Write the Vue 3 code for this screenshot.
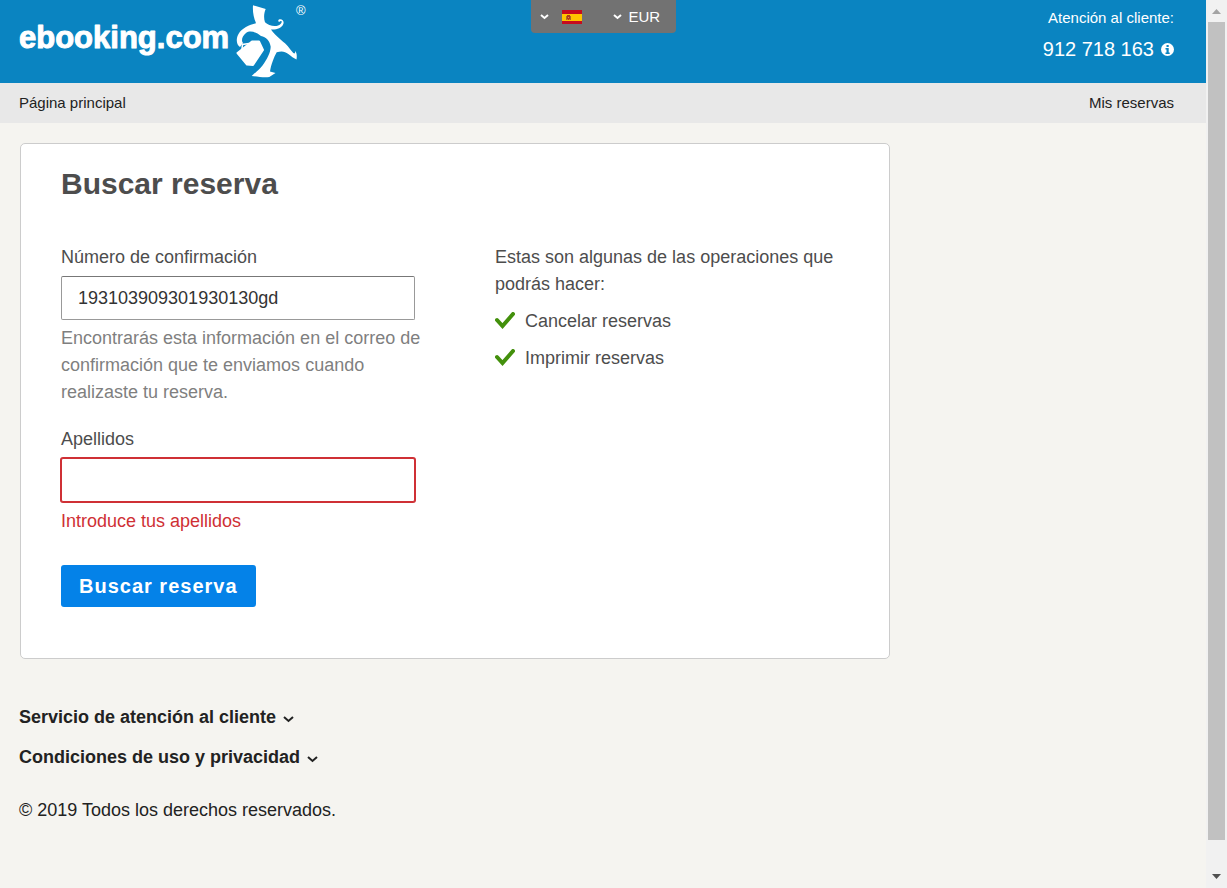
<script setup>
import { ref } from 'vue'

const confirmation = ref('193103909301930130gd')
const surname = ref('')
const currency = ref('EUR')
const operations = ['Cancelar reservas', 'Imprimir reservas']
const footerSections = ['Servicio de atención al cliente', 'Condiciones de uso y privacidad']
</script>

<template>
  <div class="shell">
    <div class="page">
      <header class="header">
        <a class="logo" href="#" aria-label="ebooking.com">
          <svg class="wordmark" width="214" height="48" viewBox="0 0 214 48" aria-hidden="true">
            <text x="0" y="29">ebooking.com</text>
          </svg>
          <svg class="mascot" width="62" height="74" viewBox="0 0 62 74" aria-hidden="true">
            <path fill="#fff" d="M17 0.300 L29.700 4 C28 8 27.500 13 29 17.300 C33 21 41 23 45 18.500 C46.500 16.500 45.500 15.500 44 16.500 C42.500 17.500 41.500 15.500 43 14.500 C46 13.500 48.500 16 47.300 19 C45.500 23.500 40 25 35 24.500 C38 29 44 34 49 38.300 C53 42 55 46 57.300 48 C59 49 59.500 48 59 46 C61 48 61 51 60.500 54.500 C57 53 56 51.500 52.300 49 C49 46.500 46 45.500 40.700 47.300 C38 52 35 60 34 66.500 L39.500 68 L33.300 72 C28 73 22 71.500 15.700 71 C21 66 24 64 26.500 60.500 C31 54 34.500 48 34.700 41.700 C34 36 30 32 25 31 C20 27 14 25 10 28 C6 31 5 36 7 38 L4 42 C0 40 0 33 2.500 29 C6 23 13 20 20 18.300 C17.500 12 16.500 6 17 0.300 Z" />
            <path fill="#fff" stroke="#fff" stroke-width="2" stroke-linejoin="round" d="M1.500 48 L16 36.500 L23 36.500 L27 45 L17 60 L11 59.500 Z" />
            <path fill="none" stroke="#fff" stroke-width="1.500" d="M6 44 L6.500 39.500 L13 38.500" />
          </svg>
          <span class="registered">®</span>
        </a>

        <div class="preferences">
          <button class="language" type="button" aria-label="Idioma: español" aria-haspopup="listbox">
            <svg width="9" height="6" viewBox="0 0 9 6" aria-hidden="true">
              <path d="M1 1 L4.500 4 L8 1" fill="none" stroke="#fff" stroke-width="2" />
            </svg>
            <svg width="20" height="14" viewBox="0 0 20 14" aria-hidden="true">
              <path fill="#c60b1e" d="M0 0h20v14H0z" />
              <path fill="#ffc400" d="M0 4h20v7H0z" />
              <path fill="#ad6c22" d="M4 6h1v4H4zM8 6h1v4H8z" />
              <path fill="#b33b18" d="M5 5h3v4l-1 1H6L5 9z" />
              <path fill="#d89a50" d="M6 7h1v1H6z" />
            </svg>
          </button>
          <label class="currency">
            <svg width="9" height="6" viewBox="0 0 9 6" aria-hidden="true">
              <path d="M1 1 L4.500 4 L8 1" fill="none" stroke="#fff" stroke-width="2" />
            </svg>
            <select v-model="currency" aria-label="Moneda">
              <option>EUR</option>
            </select>
          </label>
        </div>

        <div class="support">
          <span>Atención al cliente:</span>
          <a class="phone" href="tel:912718163">
            912 718 163
            <svg width="13" height="13" viewBox="0 0 13 13" aria-hidden="true">
              <circle cx="6.500" cy="6.500" r="6.500" fill="#fff" />
              <path fill="#0a84c1" d="M5.500 2h2.200v2H5.500zM4.500 5h3.200v4.500h1V11H4.500V9.500h1V6.500h-1z" />
            </svg>
          </a>
        </div>
      </header>

      <nav class="nav">
        <a href="#">Página principal</a>
        <a href="#">Mis reservas</a>
      </nav>

      <main class="card">
        <h1>Buscar reserva</h1>
        <div class="columns">
          <form @submit.prevent>
            <label for="confirmation">Número de confirmación</label>
            <input id="confirmation" v-model="confirmation" type="text" aria-describedby="confirmation-help">
            <p id="confirmation-help" class="help">Encontrarás esta información en el correo de confirmación que te enviamos cuando realizaste tu reserva.</p>
            <label for="surname">Apellidos</label>
            <input id="surname" v-model="surname" class="invalid" type="text" aria-invalid="true" aria-describedby="surname-error">
            <p id="surname-error" class="error">Introduce tus apellidos</p>
            <button class="submit" type="submit">Buscar reserva</button>
          </form>
          <section>
            <p>Estas son algunas de las operaciones que podrás hacer:</p>
            <ul>
              <li v-for="operation in operations" :key="operation">
                <svg width="20" height="20" viewBox="0 0 20 20" aria-hidden="true">
                  <path d="M2 8 L7.500 14 L18 2" fill="none" stroke="#43900c" stroke-width="4" stroke-linecap="round" />
                </svg>
                {{ operation }}
              </li>
            </ul>
          </section>
        </div>
      </main>

      <footer class="footer">
        <button v-for="section in footerSections" :key="section" type="button" aria-expanded="false">
          {{ section }}
          <svg width="11" height="7" viewBox="0 0 11 7" aria-hidden="true">
            <path d="M1 1 L5.500 5 L10 1" fill="none" stroke="#222" stroke-width="2" />
          </svg>
        </button>
        <p>© 2019 Todos los derechos reservados.</p>
      </footer>
    </div>

    <div class="scrollbar" aria-hidden="true">
      <svg width="9" height="5" viewBox="0 0 9 5"><path fill="#a3a3a3" d="M0 5 L4.500 0 L9 5z" /></svg>
      <div class="thumb"></div>
      <svg width="9" height="5" viewBox="0 0 9 5"><path fill="#505050" d="M0 0 L4.500 5 L9 0z" /></svg>
    </div>
  </div>
</template>

<style>
body {
  margin: 0;
  background: #f5f4f0;
}
</style>

<style scoped>
* {
  box-sizing: border-box;
}
.shell {
  display: flex;
  min-height: 100vh;
  font-family: "Liberation Sans", Arial, sans-serif;
  font-size: 18px;
  line-height: 27px;
  color: #4d4d4d;
}
.page {
  flex: 1;
  min-width: 0;
}
a {
  color: inherit;
  text-decoration: none;
}
p, h1, ul {
  margin: 0;
  padding: 0;
}
button, input, select {
  font: inherit;
}
svg {
  flex: none;
}
.header {
  display: grid;
  grid-template-columns: 1fr auto 1fr;
  align-items: start;
  min-height: 83px;
  padding: 0 32px 0 19px;
  background: #0a84c1;
  color: #fff;
}
.logo {
  display: flex;
  align-items: flex-start;
  padding-top: 5px;
}
.wordmark {
  margin-top: 14px;
  font-size: 31px;
  font-weight: bold;
  fill: #fff;
  stroke: #fff;
  stroke-width: 1px;
  stroke-linejoin: round;
}
.mascot {
  margin-left: 3px;
}
.registered {
  margin-left: -2px;
  font-size: 13px;
  line-height: 12px;
}
.preferences {
  display: flex;
  justify-content: space-between;
  width: 145px;
  height: 33px;
  padding: 0 15px 0 9px;
  margin-left: 13px;
  border-radius: 0 0 4px 4px;
  background: #727272;
}
.language {
  display: flex;
  align-items: center;
  gap: 13px;
  padding: 0;
  border: 0;
  background: none;
}
.currency {
  display: flex;
  align-items: center;
  gap: 7px;
}
.currency select {
  appearance: none;
  padding: 0;
  border: 0;
  background: none;
  color: #fff;
  font-size: 15px;
}
.support {
  display: flex;
  flex-direction: column;
  align-items: flex-end;
  padding-top: 8px;
  font-size: 15px;
  line-height: 20px;
}
.phone {
  display: flex;
  align-items: center;
  gap: 7px;
  margin-top: 8px;
  font-size: 20px;
  line-height: 26px;
}
.nav {
  display: flex;
  justify-content: space-between;
  padding: 0 32px 0 19px;
  background: #e8e8e8;
  color: #222;
  font-size: 15px;
  line-height: 40px;
}
.card {
  max-width: 870px;
  margin: 20px 20px 0;
  padding: 20px 40px 51px;
  border: 1px solid #ccc;
  border-radius: 5px;
  background: #fff;
}
h1 {
  font-size: 30px;
  line-height: 40px;
}
.columns {
  display: grid;
  grid-template-columns: 1fr 1fr;
  gap: 80px;
  margin-top: 40px;
}
label {
  display: block;
}
input {
  display: block;
  width: 100%;
  height: 44px;
  margin: 5px 0;
  padding: 0 16px;
  border: 1px solid #999;
  border-top-color: #777;
  border-radius: 2px;
  outline: none;
  background: #fff;
  color: #333;
}
.invalid {
  margin-bottom: 6px;
  border-color: #cf3035;
  box-shadow: 0 0 0 1px #cf3035;
}
.help {
  margin: 0 -8px 20px 0;
  color: #7f7f7f;
}
.error {
  color: #cf3035;
}
.submit {
  display: block;
  height: 42px;
  margin-top: 30px;
  padding: 0 18px;
  border: 0;
  border-radius: 3px;
  background: #0482e8;
  color: #fff;
  font-size: 20px;
  font-weight: bold;
  letter-spacing: 1px;
}
ul {
  list-style: none;
}
li {
  display: flex;
  align-items: center;
  gap: 10px;
  margin-top: 10px;
}
.footer {
  display: flex;
  flex-direction: column;
  align-items: flex-start;
  gap: 13px;
  padding: 45px 19px 20px;
  color: #222;
}
.footer button {
  display: flex;
  align-items: center;
  gap: 7px;
  padding: 0;
  border: 0;
  background: none;
  color: inherit;
  font-weight: bold;
}
.footer svg {
  margin-top: 4px;
}
.footer p {
  margin-top: 13px;
}
.scrollbar {
  display: flex;
  flex-direction: column;
  align-items: center;
  gap: 8px;
  width: 21px;
  padding: 9px 2px;
  background: #f1f1f1;
}
.thumb {
  flex: 1;
  width: 17px;
  margin-bottom: 26px;
  background: #c1c1c1;
}
</style>
